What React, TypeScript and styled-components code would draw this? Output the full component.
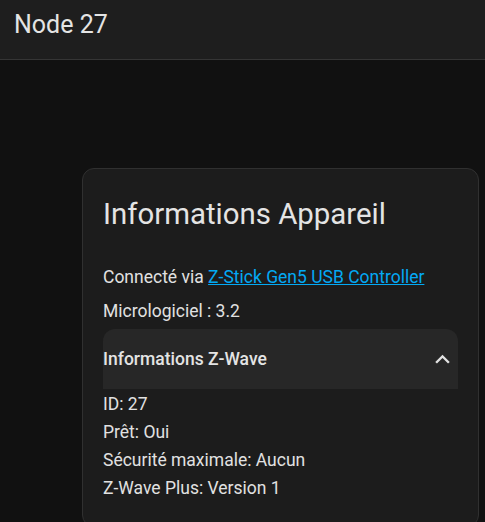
import React from 'react';
import styled, { createGlobalStyle } from 'styled-components';

const GlobalStyle = createGlobalStyle`
  html, body {
    margin: 0;
    padding: 0;
    background: #111111;
    color: #e1e1e1;
    font-family: Roboto, 'Liberation Sans', sans-serif;
  }
  #root {
    min-height: 100vh;
  }
`;

const Page = styled.div`
  min-height: 100vh;
  display: flex;
  flex-direction: column;
`;

const Toolbar = styled.header`
  box-sizing: border-box;
  height: 60px;
  background: #1e1e1e;
  border-bottom: 1px solid #353535;
  padding: 10px 0 0 14px;

  h1 {
    margin: 0;
    font-size: 25px;
    line-height: 30px;
    font-weight: 400;
    color: #e4e4e4;
  }
`;

const Content = styled.main`
  display: flex;
  padding: 108px 6px 0 82px;
`;

const Card = styled.section`
  flex: 1;
  background: #1c1c1c;
  border: 1px solid #303030;
  border-radius: 12px;
  padding: 25px 20px 24px;
`;

const CardTitle = styled.h2`
  margin: 0 0 29px;
  font-size: 29.4px;
  line-height: 40px;
  font-weight: 400;
  color: #e4e4e4;
`;

const Line = styled.div<{ $gap?: number }>`
  font-size: 17.5px;
  line-height: 28px;
  margin-bottom: ${(p) => p.$gap ?? 0}px;

  a {
    color: #03a9f4;
    text-decoration: underline;
  }
`;

const Panel = styled.div`
  display: flex;
  flex-direction: column;
`;

const PanelHeader = styled.div`
  display: flex;
  align-items: center;
  justify-content: space-between;
  height: 60px;
  background: #272727;
  border-radius: 12px 12px 0 0;
  margin-bottom: 1px;

  span {
    font-size: 17.5px;
    font-weight: 500;
    color: #e4e4e4;
  }

  svg {
    width: 29px;
    height: 29px;
    margin-right: 1px;
    fill: #e1e1e1;
  }
`;

export default function App() {
  return (
    <Page>
      <GlobalStyle />
      <Toolbar>
        <h1>Node 27</h1>
      </Toolbar>
      <Content>
        <Card>
          <CardTitle>Informations Appareil</CardTitle>
          <Line $gap={6}>
            Connecté via <a href="#">Z-Stick Gen5 USB Controller</a>
          </Line>
          <Line $gap={4}>Micrologiciel : 3.2</Line>
          <Panel>
            <PanelHeader>
              <span>Informations Z-Wave</span>
              <svg viewBox="0 0 24 24">
                <path d="M7.41,15.41L12,10.83L16.59,15.41L18,14L12,8L6,14L7.41,15.41Z" />
              </svg>
            </PanelHeader>
            <Line>ID: 27</Line>
            <Line>Prêt: Oui</Line>
            <Line>Sécurité maximale: Aucun</Line>
            <Line>Z-Wave Plus: Version 1</Line>
          </Panel>
        </Card>
      </Content>
    </Page>
  );
}
